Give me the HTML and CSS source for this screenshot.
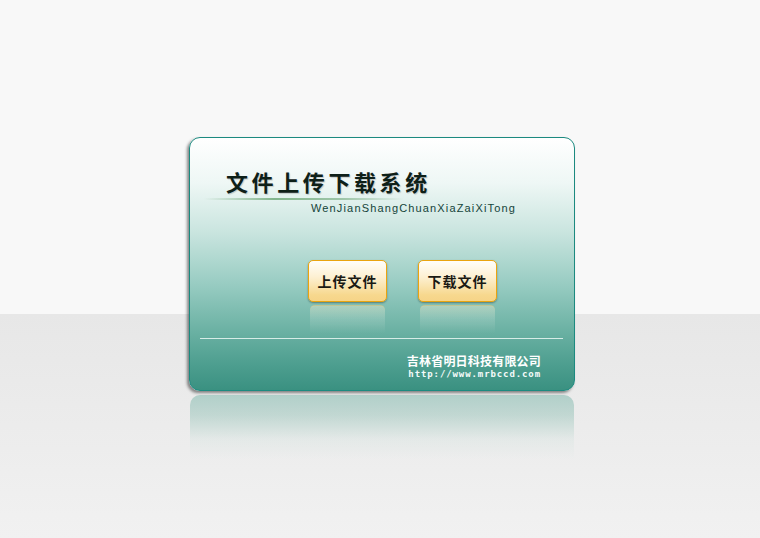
FILE: index.html
```html
<!DOCTYPE html>
<html lang="zh">
<head>
<meta charset="utf-8">
<title>文件上传下载系统</title>
<link rel="stylesheet" href="styles.css">
</head>
<body>
<div class="stage">
  <div class="card">
    <div class="title-block">
      <h1 class="title">文件上传下载系统</h1>
      <div class="title-rule"></div>
      <div class="pinyin">WenJianShangChuanXiaZaiXiTong</div>
    </div>
    <div class="buttons">
      <div class="btn-wrap">
        <button class="btn">上传文件</button>
        <div class="btn-reflect"></div>
      </div>
      <div class="btn-wrap">
        <button class="btn">下载文件</button>
        <div class="btn-reflect"></div>
      </div>
    </div>
    <div class="sep"></div>
    <div class="company">
      <div class="company-name">吉林省明日科技有限公司</div>
      <div class="company-url">http://www.mrbccd.com</div>
    </div>
  </div>
  <div class="reflection"></div>
</div>
</body>
</html>
```
FILE: styles.css
```css
html, body {
  margin: 0;
  padding: 0;
}
body {
  width: 760px;
  height: 538px;
  overflow: hidden;
  font-family: "Noto Sans CJK SC", "Liberation Sans", sans-serif;
  background: linear-gradient(to bottom, #f8f8f8 0, #f8f8f8 314px, #e7e7e7 314px, #f1f1f1 100%);
}
.stage {
  padding-top: 137px;
  padding-left: 189px;
  display: flex;
  flex-direction: column;
}
.card {
  width: 384px;
  height: 252px;
  border: 1px solid #1c8a80;
  border-radius: 11px;
  background: linear-gradient(to bottom, #ffffff 0%, #eef7f5 18%, #c8e4de 38%, #98ccc2 58%, #6cb2a4 76%, #4d9e8f 90%, #3a9181 100%);
  box-shadow: -2px 2px 3px rgba(0, 0, 0, 0.45);
  display: flex;
  flex-direction: column;
}
.title-block {
  display: flex;
  flex-direction: column;
  padding-top: 30px;
}
.title {
  margin: 0 0 0 36px;
  font-size: 22px;
  line-height: 26px;
  font-weight: 700;
  letter-spacing: 3.6px;
  color: #0e2018;
  text-shadow: 1px 1px 1px rgba(0, 0, 0, 0.18);
}
.title-rule {
  margin: 4px 0 0 14px;
  width: 200px;
  height: 2px;
  background: linear-gradient(to right, rgba(140, 190, 150, 0) 0%, rgba(120, 175, 130, 0.9) 35%, rgba(130, 180, 140, 0.7) 70%, rgba(150, 190, 160, 0) 100%);
}
.pinyin {
  margin: 2px 0 0 121px;
  font-family: "Liberation Sans", "DejaVu Sans", sans-serif;
  font-size: 11px;
  line-height: 13px;
  letter-spacing: 1.15px;
  color: #15443a;
}
.buttons {
  display: flex;
  gap: 31px;
  margin: 45px 0 0 118px;
}
.btn-wrap {
  display: flex;
  flex-direction: column;
}
.btn {
  width: 79px;
  height: 42px;
  padding: 0;
  border: 1px solid #eaa410;
  border-radius: 5px;
  background: linear-gradient(to bottom, #fffefa 0%, #fdf0d2 40%, #f7d88e 85%, #f6d488 100%);
  box-shadow: 0 1px 2px rgba(0, 0, 0, 0.35);
  font-family: "Noto Sans CJK SC", sans-serif;
  font-size: 14px;
  font-weight: 700;
  letter-spacing: 1px;
  color: #1a1a14;
  text-align: center;
}
.btn-reflect {
  margin: 3px 2px 0 2px;
  height: 28px;
  border-radius: 5px 5px 0 0;
  border-top: 1px solid rgba(240, 200, 120, 0.55);
  background: linear-gradient(to bottom, rgba(255, 240, 210, 0.35) 0%, rgba(220, 235, 225, 0.2) 45%, rgba(255, 255, 255, 0) 100%);
}
.sep {
  margin: 4px 11px 0 10px;
  height: 1px;
  background: #d6ece6;
}
.company {
  display: flex;
  flex-direction: column;
  align-items: flex-end;
  padding-right: 33px;
  margin-top: 14px;
}
.company-name {
  font-size: 12px;
  line-height: 15px;
  font-weight: 700;
  letter-spacing: 0.2px;
  color: #ffffff;
}
.company-url {
  margin-top: 1px;
  font-family: "DejaVu Sans Mono", "Liberation Mono", monospace;
  font-size: 9px;
  line-height: 11px;
  font-weight: 700;
  letter-spacing: 0.9px;
  color: #f4fbf9;
}
.reflection {
  margin: 4px 0 0 1px;
  width: 384px;
  height: 80px;
  border-radius: 10px 10px 0 0;
  background: linear-gradient(to bottom, rgba(120, 180, 168, 0.5) 0%, rgba(130, 185, 172, 0.4) 25%, rgba(200, 222, 216, 0.25) 55%, rgba(240, 240, 240, 0) 80%);
}
```
